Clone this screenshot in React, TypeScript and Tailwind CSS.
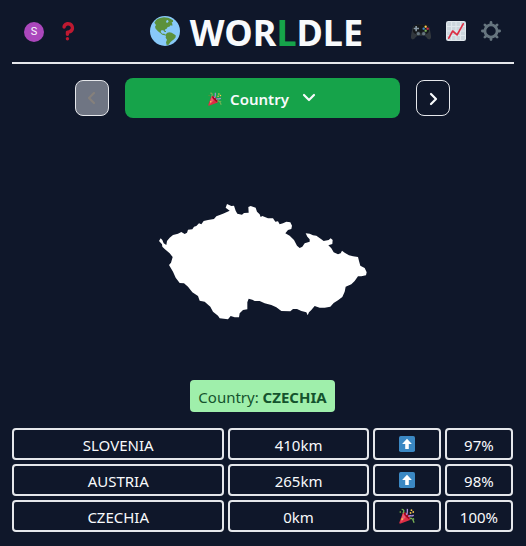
import type { ReactNode } from "react";

type IconProps = { className?: string };

function Globe({ className }: IconProps) {
  return (
    <svg viewBox="0 0 90 90" className={className} aria-hidden="true">
      <circle cx="45" cy="45" r="45" fill="#88c9f9" />
      <path
        fill="#5c913b"
        d="M15 17C18 10 26 6 34 5L42 4L54 5L61 8L69 13L69 18L65 19L67 24L67 29L62 28L58 32L53 33L50 38L46 40L44 44L48 45L48 48L43 47L40 43L34 43L32 48L37 53L43 53L46 56L52 50L58 49L65 50L71 54L77 58L77 64L72 70L66 74L61 79L56 86L50 87L48 79L51 71L47 65L48 59L44 58L37 56L31 51L24 46L17 38L15 32L18 27L13 20Z"
      />
      <path fill="#88c9f9" d="M50 13L54 12L56 17L51 21L48 18Z" />
    </svg>
  );
}

function QuestionMark({ className }: IconProps) {
  return (
    <svg viewBox="0 0 36 36" className={className} fill="#be1931" aria-hidden="true">
      <path d="M17 27c-1.657 0-3-1.343-3-3v-4c0-1.657 1.343-3 3-3 .603-.006 6-1 6-5 0-2-2-4-5-4-2.441 0-4 2-4 3 0 1.657-1.343 3-3 3s-3-1.343-3-3c0-4.878 4.58-9 10-9 8 0 11 5.982 11 11 0 4.145-2.277 7.313-6.413 8.92-.9.351-1.79.587-2.587.747V24c0 1.657-1.343 3-3 3z" />
      <circle cx="17" cy="32" r="3" />
    </svg>
  );
}

function Gamepad({ className }: IconProps) {
  return (
    <svg viewBox="0 0 60 60" className={className} aria-hidden="true">
      <path
        fill="#31373d"
        d="M4 22C6 15 12 11 18 11h24c6 0 12 4 14 11l4 22c2 8-3 12-7 11-5-1-7-10-13-11H20c-6 1-8 10-13 11-4 1-9-3-7-11Z"
      />
      <path fill="#15181b" d="M6 20C8 14 13 11 18 11h24c5 0 10 3 12 9 2 11-2 19-11 19l-3-2H20l-3 2C8 39 4 31 6 20Z" />
      <circle cx="22" cy="38" r="7" fill="#292f33" />
      <circle cx="38" cy="38" r="7" fill="#292f33" />
      <circle cx="22" cy="38" r="5" fill="#66757f" />
      <circle cx="38" cy="38" r="5" fill="#66757f" />
      <path fill="#8899a6" d="M13 15h5v5h6v5h-6v6h-5v-6H8v-5h5Z" />
      <circle cx="44" cy="17" r="3.500" fill="#ffcc4d" />
      <circle cx="38" cy="23" r="3.500" fill="#3b88c3" />
      <circle cx="50" cy="23" r="3.500" fill="#dd2e44" />
      <circle cx="44" cy="29" r="3.500" fill="#78b159" />
    </svg>
  );
}

function Chart({ className }: IconProps) {
  return (
    <svg viewBox="0 0 36 36" className={className} aria-hidden="true">
      <rect width="36" height="36" rx="4" fill="#e1e8ed" />
      <rect x="2" y="2" width="32" height="32" rx="2" fill="#ccd6dd" />
      <path d="M10 2v32M18 2v32M26 2v32M2 10h32M2 18h32M2 26h32" stroke="#e1e8ed" strokeWidth="2" />
      <path d="M5 31L12 18L20 25L31 5" fill="none" stroke="#dd2e44" strokeWidth="3" strokeLinecap="round" strokeLinejoin="round" />
    </svg>
  );
}

function Gear({ className }: IconProps) {
  return (
    <svg viewBox="0 0 36 36" className={className} fill="none" stroke="#66757f" aria-hidden="true">
      <circle cx="18" cy="18" r="11" strokeWidth="5" />
      <path
        strokeWidth="5"
        strokeLinecap="round"
        d="M18 2.500v3M18 30.500v3M2.500 18h3M30.500 18h3M7 7l3 3M26 26l3 3M7 29l3-3M26 10l3-3"
      />
    </svg>
  );
}

function Popper({ className }: IconProps) {
  return (
    <svg viewBox="0 0 36 36" className={className} aria-hidden="true">
      <path fill="#dd2e44" d="M1 32L9 10C12 8 17 11 21 16C25 20 27 25 25 27L4 35C1 36 0 34 1 32Z" />
      <path fill="#ea596e" d="M9 12L4 32L15 21Z" />
      <path fill="#a0041e" d="M10 10C15 11 24 19 25 26C20 25 11 16 10 10Z" />
      <path fill="none" stroke="#aa8dd8" strokeWidth="3" d="M16 15C21 11 18 8 19 2M21 19C25 15 28 20 33 16" />
      <path fill="none" stroke="#77b255" strokeWidth="3" d="M6 3C12 3 12 7 9 12M24 24C30 20 27 28 34 24M31 26L34 33" />
      <circle cx="28" cy="5" r="2" fill="#ffcc4d" />
      <circle cx="32" cy="9" r="2" fill="#ffcc4d" />
      <circle cx="26" cy="11" r="2" fill="#ffcc4d" />
      <circle cx="7" cy="25" r="2" fill="#ffcc4d" />
      <circle cx="3" cy="9" r="2" fill="#5c913b" />
    </svg>
  );
}

function UpArrow({ className }: IconProps) {
  return (
    <svg viewBox="0 0 36 36" className={className} role="img" aria-label="North">
      <rect width="36" height="36" rx="4" fill="#3b88c3" />
      <path fill="#fff" d="M18 6L7 18h7v11h8V18h7Z" />
    </svg>
  );
}

function Chevron({ d, className }: { d: string; className?: string }) {
  return (
    <svg viewBox="0 0 16 16" className={className} fill="none" stroke="currentColor" strokeWidth="2.2" strokeLinecap="round" strokeLinejoin="round" aria-hidden="true">
      <path d={d} />
    </svg>
  );
}

function CountryShape() {
  return (
    <svg viewBox="28 24 624 354" className="w-[208px]" role="img" aria-label="Country outline">
      <path
        fill="#fff"
        d="M28 138L33 130L38 135L42 145L50 150L52 138L60 128L70 120L85 116L95 111L105 117L112 113L115 104L128 103L133 95L140 93L148 85L155 88L162 78L175 75L193 72L200 64L220 56L240 47L228 38L232 27L245 33L253 32L258 47L263 56L277 59L283 54L297 53L296 36L303 33L318 38L322 50L330 58L333 66L338 63L355 70L370 70L377 80L385 79L390 88L400 85L410 80L422 82L427 92L425 102L415 105L407 115L420 122L433 135L442 152L450 159L458 155L465 145L480 140L480 133L473 125L468 115L480 116L490 121L500 122L515 133L522 138L537 135L543 130L549 135L548 147L536 151L545 160L552 172L565 178L573 175L577 167L585 173L598 181L610 184L625 186L628 198L632 212L645 219L651 232L649 241L635 244L625 244L615 258L605 268L588 275L585 290L578 306L565 316L552 324L542 335L525 338L510 338L495 333L485 345L478 352L474 361L470 352L455 348L442 342L430 342L422 349L395 348L380 337L365 330L345 325L330 318L315 318L308 314L297 311L293 322L293 343L280 345L270 355L268 367L255 367L243 363L235 373L210 370L205 362L190 350L182 335L165 320L150 317L145 303L128 292L115 275L103 265L90 264L78 248L70 230L58 210L64 203L69 186L60 175L45 162L38 155L37 148Z"
      />
    </svg>
  );
}

const guesses: { country: string; distance: string; found: boolean; proximity: string }[] = [
  { country: "SLOVENIA", distance: "410km", found: false, proximity: "97%" },
  { country: "AUSTRIA", distance: "265km", found: false, proximity: "98%" },
  { country: "CZECHIA", distance: "0km", found: true, proximity: "100%" },
];

function Cell({ className, children }: { className: string; children: ReactNode }) {
  return (
    <td className={`flex h-8 items-center justify-center rounded border-2 border-[#e5e7eb] p-0 ${className}`}>
      {children}
    </td>
  );
}

export default function App() {
  return (
    <div className="min-h-screen bg-[#0f172a] px-3 pb-3 font-['Noto_Sans',sans-serif] text-[15px] leading-6 text-[#f8fafc]">
      <header className="flex h-16 items-center border-b-2 border-[#e5e7eb]">
        <div className="flex items-center gap-3.5 pr-6 pl-3">
          <button type="button" aria-label="Profile" className="mt-0.5 flex size-5 items-center justify-center rounded-full bg-[#ab47bc] font-[Roboto,sans-serif] text-[11px]">
            S
          </button>
          <button type="button" aria-label="Help">
            <QuestionMark className="size-5" />
          </button>
        </div>
        <h1 className="flex flex-1 items-center justify-center gap-2.5 text-4xl font-bold">
          <Globe className="size-[30px]" />
          <span className="pt-1">
            WOR<span className="text-[#16a34a]">L</span>DLE
          </span>
        </h1>
        <div className="flex items-center gap-[15px] pr-[13px]">
          <button type="button" aria-label="Other games">
            <Gamepad className="size-5" />
          </button>
          <button type="button" aria-label="Statistics">
            <Chart className="size-5" />
          </button>
          <button type="button" aria-label="Settings">
            <Gear className="size-5" />
          </button>
        </div>
      </header>
      <main className="pr-px">
        <nav className="mt-3.5 flex items-center justify-center gap-4">
          <button type="button" disabled aria-label="Previous round" className="flex h-9 w-[34px] items-center justify-center rounded-lg border border-[#e5e7eb] bg-[#6f7583] text-[#85807c]">
            <Chevron d="M10 3L5 8L10 13" className="size-4" />
          </button>
          <button type="button" className="flex h-10 w-[55%] items-center justify-center rounded-lg bg-[#16a34a] pt-0.5 font-semibold">
            <Popper className="mr-2 size-3.5" />
            Country
            <Chevron d="M3 4L8 9L13 4" className="ml-3 size-4" />
          </button>
          <button type="button" aria-label="Next round" className="flex h-9 w-[34px] items-center justify-center rounded-lg border border-[#e5e7eb]">
            <Chevron d="M6 4L11 9L6 14" className="size-4" />
          </button>
        </nav>
        <div className="flex h-[262px] items-center justify-center pt-[26px]">
          <CountryShape />
        </div>
        <p className="mx-auto w-fit rounded bg-[#9fefab] px-2 pt-[5px] pb-[3px] text-[#14532d]">
          Country: <strong>CZECHIA</strong>
        </p>
        <table className="mt-4 block">
          <tbody className="grid gap-1">
            {guesses.map((g) => (
              <tr key={g.country} className="grid grid-cols-7 gap-1">
                <Cell className="col-span-3 pt-0.5">{g.country}</Cell>
                <Cell className="col-span-2 pt-0.5">{g.distance}</Cell>
                <Cell className="">{g.found ? <Popper className="size-4" /> : <UpArrow className="size-4" />}</Cell>
                <Cell className="pt-0.5">{g.proximity}</Cell>
              </tr>
            ))}
          </tbody>
        </table>
      </main>
    </div>
  );
}
